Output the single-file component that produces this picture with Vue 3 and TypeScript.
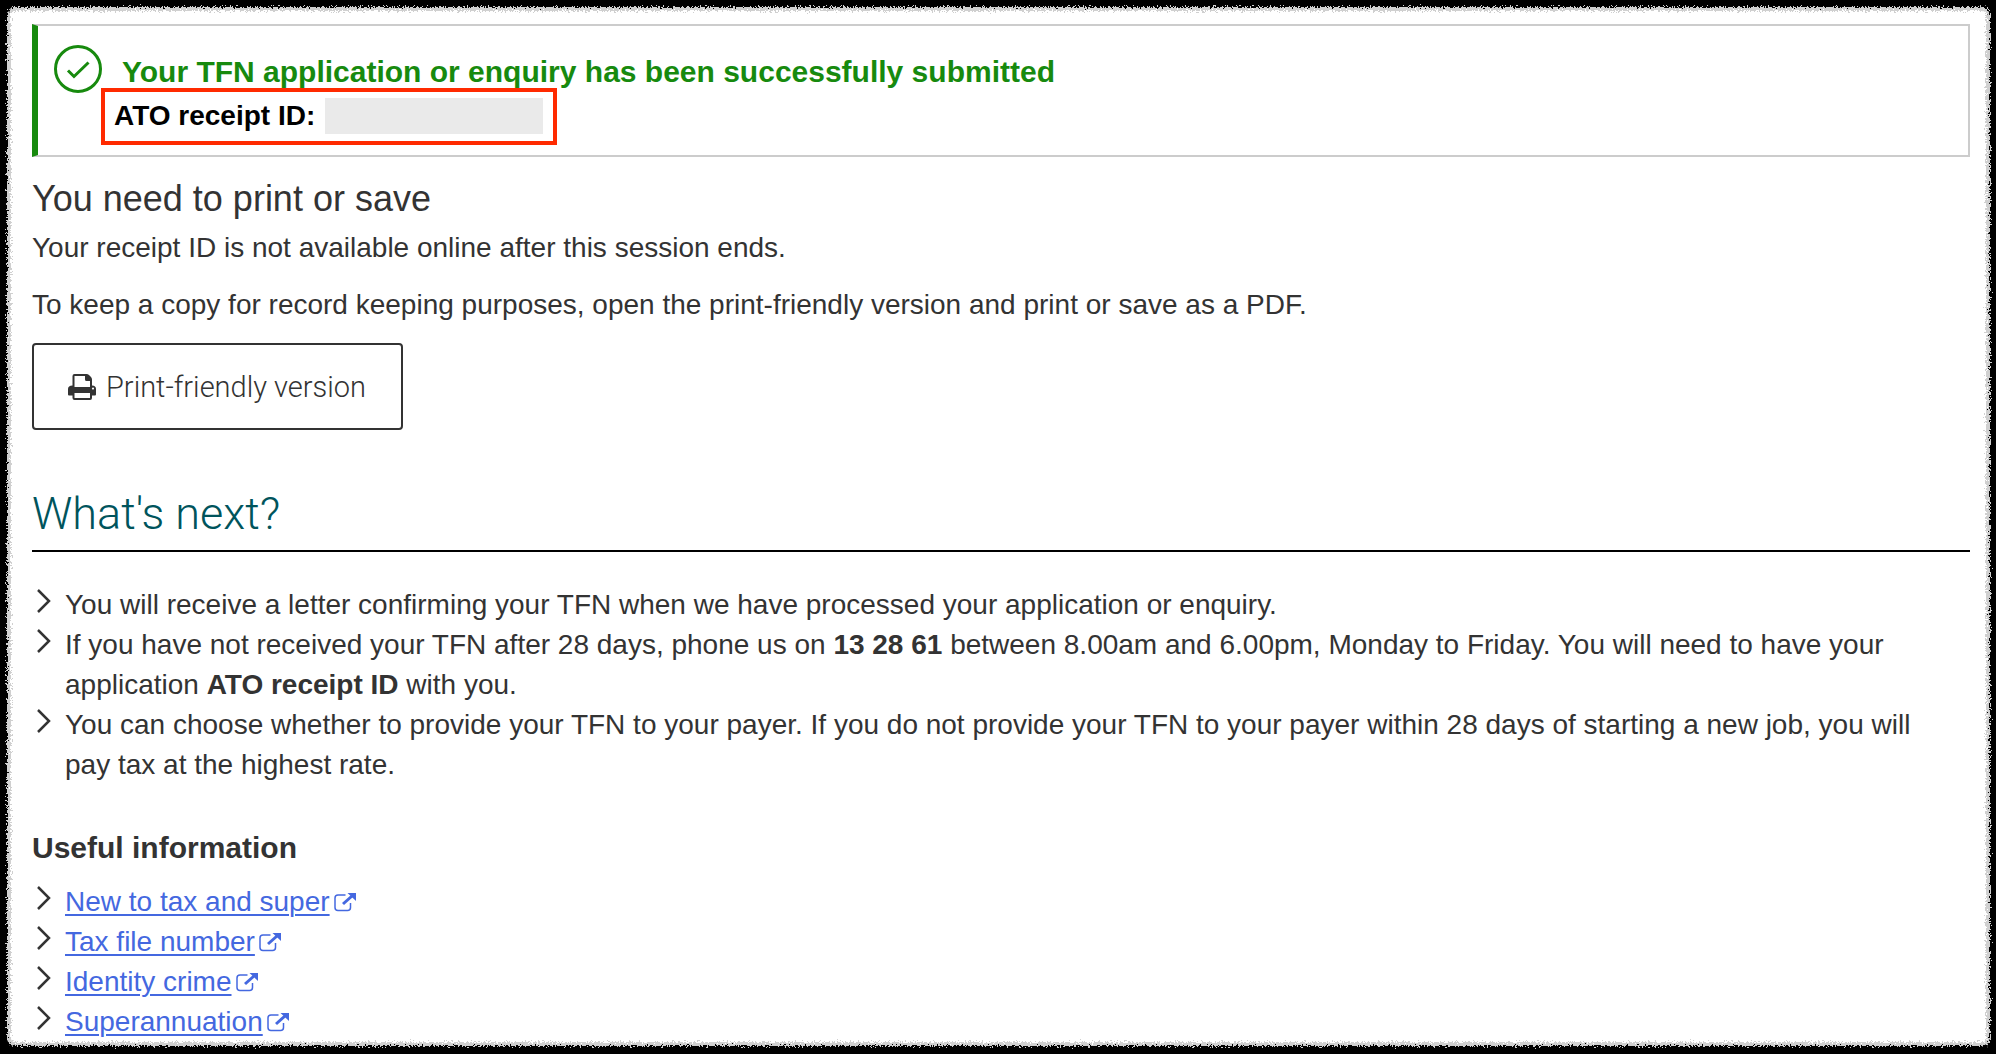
<script setup lang="ts">
interface UsefulLink {
  label: string
  href: string
}

const links: UsefulLink[] = [
  { label: 'New to tax and super', href: '#new-to-tax' },
  { label: 'Tax file number', href: '#tfn' },
  { label: 'Identity crime', href: '#identity-crime' },
  { label: 'Superannuation', href: '#super' },
]

function openPrintVersion(): void {
  window.print()
}
</script>

<template>
  <div class="page">
    <svg class="defs" width="0" height="0" aria-hidden="true">
      <filter id="rough-edge" x="-1%" y="-1%" width="102%" height="102%" color-interpolation-filters="sRGB">
        <feTurbulence type="fractalNoise" baseFrequency="0.6" numOctaves="2" seed="4" result="noise" />
        <feDisplacementMap in="SourceGraphic" in2="noise" scale="8" xChannelSelector="R" yChannelSelector="G" />
      </filter>
    </svg>
    <div class="paper" aria-hidden="true"></div>

    <main class="content">
      <section class="alert" role="status">
        <svg class="tick" viewBox="0 0 48 48" aria-hidden="true">
          <circle cx="24" cy="24" r="22.5" />
          <path d="M14 25.500l6 6L34.500 17.500" />
        </svg>
        <div class="alert-body">
          <h1 class="alert-title">Your TFN application or enquiry has been successfully submitted</h1>
          <p class="receipt">
            <span>ATO receipt ID:</span>
            <span class="redacted"></span>
          </p>
        </div>
      </section>

      <h2 class="save-title">You need to print or save</h2>
      <p class="text">Your receipt ID is not available online after this session ends.</p>
      <p class="text">To keep a copy for record keeping purposes, open the print-friendly version and print or save as a PDF.</p>

      <button class="print" type="button" @click="openPrintVersion">
        <svg class="printer" viewBox="0 0 28 26" aria-hidden="true">
          <path
            fill-rule="evenodd"
            d="M4.500 11.500V2Q4.500 0 6.500 0H18.500Q20 0 21 1L23 3Q24 4 24 5.500V11.500Q28 11.500 28 15V20.500Q28 21.500 27 21.500H24V24Q24 26 22 26H6.500Q4.500 26 4.500 24V21.500H1Q0 21.500 0 20.500V15Q0 11.500 4.500 11.500ZM6.500 2V13H22V7H18.500Q17 7 17 5.500V2ZM6.500 19V24H22V19ZM25 13.500a1 1 0 1 0 .01 0Z"
          />
        </svg>
        <span>Print-friendly version</span>
      </button>

      <h2 class="next-title">What's next?</h2>

      <ul class="list">
        <li>
          <svg class="chevron" viewBox="0 0 14 24" aria-hidden="true"><path d="M1 1l11 11L1 23" /></svg>
          <span>You will receive a letter confirming your TFN when we have processed your application or enquiry.</span>
        </li>
        <li>
          <svg class="chevron" viewBox="0 0 14 24" aria-hidden="true"><path d="M1 1l11 11L1 23" /></svg>
          <span>If you have not received your TFN after 28 days, phone us on <strong>13 28 61</strong> between 8.00am and 6.00pm, Monday to Friday. You will need to have your application <strong>ATO receipt ID</strong> with you.</span>
        </li>
        <li>
          <svg class="chevron" viewBox="0 0 14 24" aria-hidden="true"><path d="M1 1l11 11L1 23" /></svg>
          <span>You can choose whether to provide your TFN to your payer. If you do not provide your TFN to your payer within 28 days of starting a new job, you will pay tax at the highest rate.</span>
        </li>
      </ul>

      <h3 class="useful-title">Useful information</h3>
      <ul class="list">
        <li v-for="link in links" :key="link.href">
          <svg class="chevron" viewBox="0 0 14 24" aria-hidden="true"><path d="M1 1l11 11L1 23" /></svg>
          <a class="link" :href="link.href">
            <span class="link-label">{{ link.label }}</span>
            <svg class="external" viewBox="0 0 22 20" aria-hidden="true">
              <path class="box" d="M11.500 3H4Q1 3 1 6V15.500Q1 18.500 4 18.500H13.500Q16.500 18.500 16.500 15.500V11" />
              <path class="shaft" d="M9 12L18 4" />
              <path class="head" d="M13.500 1H22V9Z" />
            </svg>
          </a>
        </li>
      </ul>
    </main>
  </div>
</template>

<style>
body {
  margin: 0;
  background: #000;
}
</style>

<style scoped>
.page {
  position: relative;
  box-sizing: border-box;
  min-height: 100vh;
  overflow: hidden;
  padding: 24px 26px 0 32px;
  background: #000;
  color: #333;
  font-family: "Liberation Sans", Arial, Helvetica, sans-serif;
  font-size: 28px;
  line-height: 40px;
}

.defs {
  position: absolute;
}

/* Torn-paper sheet behind the content */
.paper {
  position: absolute;
  inset: 7px 6px 8px 7px;
  box-sizing: border-box;
  border: 4px solid #d0d0d0;
  border-radius: 8px;
  background: #fff;
  filter: url(#rough-edge);
}

.content {
  position: relative;
}

h1,
h2,
h3,
p,
ul {
  margin: 0;
}

.alert {
  display: flex;
  box-sizing: border-box;
  height: 133px;
  padding-top: 19px;
  padding-left: 16px;
  border: 2px solid #ccc;
  border-left: 6px solid #178a0e;
}

.tick {
  flex: none;
  width: 48px;
  height: 48px;
  fill: none;
  stroke: #178a0e;
  stroke-width: 3;
}

.alert-body {
  padding-top: 7px;
}

.alert-title {
  padding-left: 20px;
  color: #178a0e;
  font-size: 30px;
  line-height: 40px;
}

.receipt {
  position: absolute;
  top: 64px;
  left: 69px;
  display: flex;
  align-items: center;
  gap: 10px;
  padding: 5px 10px 7px 9px;
  border: 4px solid #ff2a00;
  color: #000;
  font-weight: bold;
  line-height: 37px;
}

.redacted {
  width: 218px;
  height: 36px;
  background: #eaeaea;
}

.save-title {
  margin-top: 20px;
  font-size: 36px;
  font-weight: normal;
  line-height: 44px;
}

.text {
  margin-top: 7px;
}

.text + .text {
  margin-top: 17px;
}

.print {
  display: flex;
  align-items: center;
  gap: 10px;
  height: 87px;
  margin-top: 18px;
  padding: 0 35px 0 34px;
  border: 2px solid #333;
  border-radius: 4px;
  background: #fff;
  color: #333;
  font-family: Roboto, "Liberation Sans", sans-serif;
  font-size: 29px;
  font-weight: 350;
}

.printer {
  width: 28px;
  height: 26px;
  fill: #333;
}

.next-title {
  margin-top: 55px;
  padding-bottom: 7px;
  border-bottom: 2px solid #000;
  color: #00545c;
  font-family: Roboto, "Liberation Sans", sans-serif;
  font-size: 45px;
  font-weight: 350;
  line-height: 58px;
}

.list {
  padding: 0 32px 0 5px;
  list-style: none;
}

.next-title + .list {
  margin-top: 33px;
}

.list li {
  display: flex;
  align-items: flex-start;
  gap: 14px;
}

.chevron {
  flex: none;
  width: 14px;
  height: 24px;
  margin-top: 4px;
  fill: none;
  stroke: #333;
  stroke-width: 2.5;
}

.useful-title {
  margin-top: 43px;
  margin-bottom: 14px;
  font-size: 30px;
  line-height: 40px;
}

.link {
  display: flex;
  align-items: center;
  gap: 4px;
  color: #4468e0;
  text-decoration: none;
}

.link-label {
  text-decoration: underline;
  text-decoration-thickness: 2px;
  text-underline-offset: 3px;
}

.external {
  width: 22px;
  height: 20px;
  fill: none;
  stroke: #4468e0;
}

.external .box {
  stroke-width: 1.5;
}

.external .shaft {
  stroke-width: 3;
}

.external .head {
  fill: #4468e0;
  stroke: none;
}
</style>
